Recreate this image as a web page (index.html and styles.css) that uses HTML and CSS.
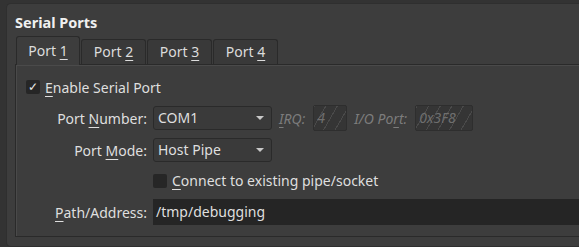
FILE: index.html
```html
<!DOCTYPE html>
<html lang="en">
<head>
  <meta charset="UTF-8">
  <title>Serial Ports</title>
  <link rel="stylesheet" href="styles.css">
</head>
<body>
  <div class="group">
    <div class="group-title">Serial Ports</div>

    <div class="tabs">
      <div class="tab active">Port <u>1</u></div>
      <div class="tab">Port <u>2</u></div>
      <div class="tab">Port <u>3</u></div>
      <div class="tab">Port <u>4</u></div>
    </div>

    <div class="pane">
      <label class="check-row">
        <span class="checkbox checked">&#10003;</span>
        <span><u>E</u>nable Serial Port</span>
      </label>

      <div class="form">
        <div class="label">Port <u>N</u>umber:</div>
        <div class="field-line">
          <div class="combo">COM1<span class="arrow"></span></div>
          <span class="dim-label"><u>I</u>RQ:</span>
          <div class="disabled-edit irq">4</div>
          <span class="dim-label">I/O Po<u>r</u>t:</span>
          <div class="disabled-edit io">0x3F8</div>
        </div>

        <div class="label">Port <u>M</u>ode:</div>
        <div class="field-line">
          <div class="combo">Host Pipe<span class="arrow"></span></div>
        </div>

        <div></div>
        <label class="check-row sub">
          <span class="checkbox"></span>
          <span><u>C</u>onnect to existing pipe/socket</span>
        </label>

        <div class="label"><u>P</u>ath/Address:</div>
        <div class="edit">/tmp/debugging</div>
      </div>
    </div>
  </div>
</body>
</html>
```

FILE: styles.css
```css
* {
  box-sizing: border-box;
}

body {
  margin: 0;
  padding: 3px 0 0 6px;
  height: 247px;
  overflow: hidden;
  background-color: #333333;
  color: #dfdfdf;
  font-family: 'Noto Sans', sans-serif;
  font-size: 14px;
}

u {
  text-decoration: underline;
  text-underline-offset: 3px;
}

.group {
  background-color: #3d3d3d;
  border: 1px solid #2f2f2f;
  border-right: none;
  border-radius: 5px 0 0 5px;
  height: 244px;
  padding: 8px 0 0 8px;
}

.group-title {
  font-weight: bold;
  font-size: 14.5px;
  color: #f0f0f0;
  line-height: 20px;
  height: 24px;
}

/* tab bar */
.tabs {
  display: flex;
  align-items: flex-end;
  height: 28px;
  padding-left: 1px;
}

.tab {
  height: 25px;
  width: 65px;
  margin-right: 1px;
  border: 1px solid #2a2a2a;
  border-bottom: none;
  border-radius: 3px 3px 0 0;
  background-color: #393939;
  text-align: center;
  line-height: 24px;
  color: #dcdcdc;
}

.tab.active {
  height: 29px;
  width: 64px;
  background-color: #3d3d3d;
  line-height: 27px;
  position: relative;
  top: 1px;
}

.pane {
  border: 1px solid #2a2a2a;
  border-right: none;
  box-shadow: inset 1px 1px 0 #4a4a4a;
  height: 173px;
  padding: 13px 0 0 10px;
}

.check-row {
  display: flex;
  align-items: center;
  gap: 5px;
  height: 18px;
}

.checkbox {
  width: 14px;
  height: 14px;
  background-color: #262626;
  border-radius: 2px;
  color: #e8e8e8;
  font-size: 12px;
  line-height: 14px;
  text-align: center;
}

.form {
  display: grid;
  grid-template-columns: 121px 1fr;
  grid-template-rows: 24px 24px 21px 26px;
  column-gap: 6px;
  row-gap: 8px;
  margin-top: 10px;
  align-items: center;
}

.label {
  text-align: right;
}

.field-line {
  display: flex;
  align-items: center;
}

.combo {
  width: 119px;
  height: 24px;
  border: 1px solid #2a2a2a;
  border-radius: 3px;
  background-color: #3a3a3a;
  padding-left: 4px;
  line-height: 22px;
  position: relative;
}

.arrow {
  position: absolute;
  right: 7px;
  top: 9px;
  border-left: 4px solid transparent;
  border-right: 4px solid transparent;
  border-top: 4px solid #c8c8c8;
}

.dim-label {
  color: #7c7c7c;
  font-style: italic;
  margin-left: 7px;
}

.disabled-edit {
  height: 26px;
  border: 1px solid #2e2e2e;
  border-radius: 2px;
  margin-left: 8px;
  padding-left: 3px;
  line-height: 24px;
  color: #6f6f6f;
  font-style: italic;
  background-color: #353535;
  background-image: repeating-linear-gradient(-60deg, transparent 0 9px, #4a4a4a 9px 10px);
}

.irq {
  width: 34px;
}

.io {
  width: 58px;
}

.check-row.sub {
  height: 21px;
}

.edit {
  height: 26px;
  background-color: #252525;
  padding-left: 3px;
  line-height: 26px;
}
```
